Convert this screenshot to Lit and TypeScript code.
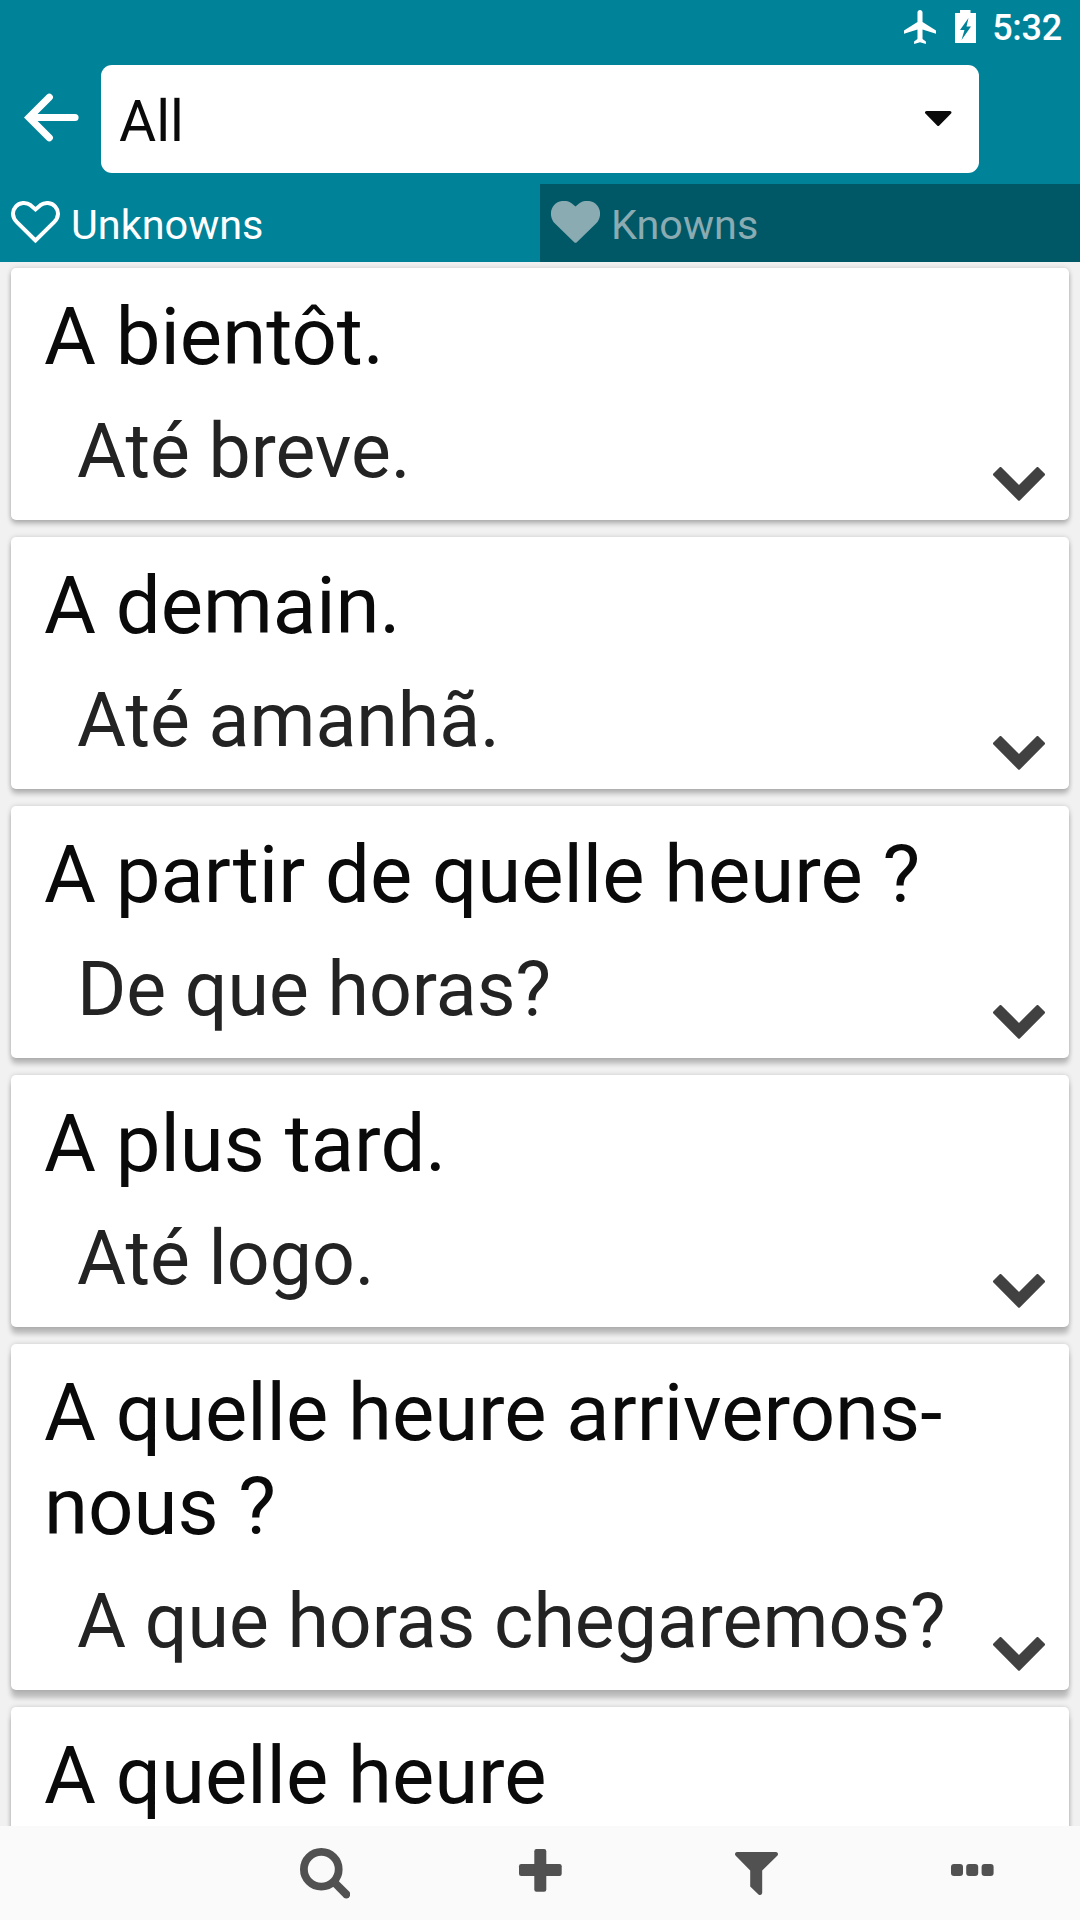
import { LitElement, html, css, svg } from "lit";
import { customElement, property } from "lit/decorators.js";

interface Phrase {
  title: string;
  translation: string;
}

const phrases: Phrase[] = [
  { title: "A bientôt.", translation: "Até breve." },
  { title: "A demain.", translation: "Até amanhã." },
  { title: "A partir de quelle heure ?", translation: "De que horas?" },
  { title: "A plus tard.", translation: "Até logo." },
  { title: "A quelle heure arriverons-nous ?", translation: "A que horas chegaremos?" },
  { title: "A quelle heure", translation: "" },
];

const heartSolid =
  "M23.2 41.2 L4.2 22.8 C-1.4 17 -1.2 9 3 4.2 C7.6 -1.2 16 -1.2 20.6 2.2 L24.5 5.6 L28.4 2.2 C33 -1.2 41.4 -1.2 46 4.2 C50.2 9 50.4 17 44.8 22.8 L25.8 41.2 Q24.5 42.4 23.2 41.2Z";
const heartOutline =
  "M24.5 39.5 L5.9 21.2 C0.9 16 1 9.8 4.6 5.8 C8.4 1.2 15.4 1 19.6 4.2 L24.5 8.4 L29.4 4.2 C33.6 1 40.6 1.2 44.4 5.8 C48 9.8 48.1 16 43.1 21.2Z";

@customElement("phrase-card")
export class PhraseCard extends LitElement {
  @property() heading = "";
  @property() translation = "";
  @property({ type: Number }) depth = 3;

  static styles = css`
    :host {
      display: block;
      flex: none;
    }
    .card {
      display: grid;
      grid-template-columns: minmax(0, 1fr) auto;
      align-items: end;
      background: #fff;
      border-radius: 5px;
      box-shadow: 0 var(--depth) 5px rgba(0, 0, 0, 0.22), 0 0 5px rgba(0, 0, 0, 0.16);
      padding: 22px 24px 19px 33px;
    }
    .heading {
      grid-column: 1 / 3;
      font-size: 79.7px;
      line-height: 94px;
      color: #0a0a0a;
      padding-right: 20px;
    }
    .translation {
      font-size: 75.2px;
      line-height: 89px;
      min-height: 89px;
      color: #232323;
      padding: 23px 0 5px 33px;
      white-space: nowrap;
    }
    .chevron {
      display: block;
      width: 52px;
      height: 34px;
    }
  `;

  render() {
    return html`
      <article class="card" style="--depth: ${this.depth}px">
        <div class="heading">${this.heading}</div>
        <div class="translation">${this.translation}</div>
        <svg class="chevron" viewBox="0 0 52 34">
          <path
            d="M1.500 7.500 L7.500 1.500 L26 20 L44.500 1.500 L50.500 7.500 L26 32.200Z"
            fill="#414141" stroke="#414141" stroke-width="3" stroke-linejoin="round"
          />
        </svg>
      </article>
    `;
  }
}

@customElement("app-root")
export class AppRoot extends LitElement {
  static styles = css`
    :host {
      display: flex;
      flex-direction: column;
      width: 1080px;
      height: 1920px;
      overflow: hidden;
      background: #f1f1f1;
      font-family: Roboto, sans-serif;
    }
    svg {
      display: block;
      flex: none;
    }
    .status {
      flex: none;
      display: flex;
      justify-content: flex-end;
      height: 55px;
      padding: 0 18px 0 0;
      box-sizing: border-box;
      background: #008299;
      color: #fff;
    }
    .plane {
      margin: 10px 19px 0 0;
    }
    .battery {
      margin: 10px 16px 0 0;
    }
    .time {
      font-size: 36px;
      font-weight: 500;
      letter-spacing: -0.25px;
      line-height: 42px;
      padding-top: 7px;
    }
    .header {
      flex: none;
      display: flex;
      height: 129px;
      box-sizing: border-box;
      padding: 10px 101px 0 24px;
      background: #008299;
    }
    .back {
      margin: 28px 22px 0 0;
    }
    .select {
      flex: 1;
      display: flex;
      justify-content: space-between;
      height: 108px;
      box-sizing: border-box;
      padding: 0 27px 0 18px;
      border-radius: 11px;
      background: #fff;
      color: #0a0a0a;
      font-size: 57px;
      line-height: 113px;
    }
    .caret {
      margin-top: 46px;
    }
    .tabs {
      flex: none;
      display: grid;
      grid-template-columns: 1fr 1fr;
      grid-template-rows: 78px;
      height: 78px;
    }
    .tab {
      display: flex;
      gap: 11px;
      padding-left: 11px;
      font-size: 41.4px;
      line-height: 82px;
      color: #fff;
      background: #008299;
    }
    .tab.off {
      color: #8aabb1;
      background: #005866;
    }
    .heart {
      margin-top: 17px;
    }
    .list {
      flex: 1;
      min-height: 0;
      overflow: hidden;
      display: flex;
      flex-direction: column;
      gap: 17px;
      padding: 6px 11px 0;
    }
    .bar {
      flex: none;
      display: grid;
      grid-template-columns: repeat(5, 1fr);
      height: 94px;
      background: #fafafa;
    }
    .tool {
      display: flex;
      justify-content: center;
      padding-top: 21px;
    }
  `;

  private heart(filled: boolean) {
    return html`<svg class="heart" width="49" height="43" viewBox="0 0 49 43">
      ${filled
        ? svg`<path d=${heartSolid} fill="currentColor" />`
        : svg`<path d=${heartOutline} fill="none" stroke="currentColor" stroke-width="4" />`}
    </svg>`;
  }

  render() {
    return html`
      <div class="status">
        <svg class="plane" width="32" height="34" viewBox="2 2 19 20" preserveAspectRatio="none">
          <path fill="#fff" d="M21 16v-2l-8-5V3.5c0-.83-.67-1.5-1.5-1.5S10 2.67 10 3.5V9l-8 5v2l8-2.5V19l-2 1.5V22l3.5-1 3.5 1v-1.5L13 19v-5.5l8 2.5z" />
        </svg>
        <svg class="battery" width="21" height="33" viewBox="0 0 21 33">
          <path fill="#fff" fill-rule="evenodd" d="M0 3H5V0H15.500V3H21V33H0Z M13.500 8L5 20H9.500L6.500 30L16 16.500H11.500Z" />
        </svg>
        <span class="time">5:32</span>
      </div>
      <header class="header">
        <svg class="back" width="55" height="49" viewBox="0 0 55 49">
          <path d="M25.300 4.200 L5 24.500 L25.300 44.800 M6 24.500 H51" fill="none" stroke="#fff" stroke-width="7.200" stroke-linecap="round" />
        </svg>
        <div class="select">
          <span>All</span>
          <svg class="caret" width="27" height="16" viewBox="0 0 27 16">
            <path d="M1.500 1.500 H25 L13.200 13.500Z" fill="#0a0a0a" stroke="#0a0a0a" stroke-width="3" stroke-linejoin="round" />
          </svg>
        </div>
      </header>
      <nav class="tabs">
        <div class="tab">${this.heart(false)}<span>Unknowns</span></div>
        <div class="tab off">${this.heart(true)}<span>Knowns</span></div>
      </nav>
      <main class="list">
        ${phrases.map(
          (p, i) => html`<phrase-card
            .heading=${p.title}
            .translation=${p.translation}
            .depth=${4 + i}
          ></phrase-card>`
        )}
      </main>
      <footer class="bar">
        <div class="tool"></div>
        <div class="tool">
          <svg width="52" height="54" viewBox="0 0 52 54">
            <circle cx="23.300" cy="22.300" r="17.400" fill="none" stroke="#515151" stroke-width="7.800" />
            <path d="M37 36 L48.300 47.300" stroke="#515151" stroke-width="8" stroke-linecap="round" />
          </svg>
        </div>
        <div class="tool">
          <svg width="52" height="54" viewBox="0 0 52 54">
            <rect x="5" y="17" width="42.700" height="12" rx="2.200" fill="#515151" />
            <rect x="20.300" y="2" width="12" height="42.700" rx="2.200" fill="#515151" />
          </svg>
        </div>
        <div class="tool">
          <svg width="52" height="54" viewBox="0 0 52 54">
            <path d="M6.800 5 H46.200 Q49 6 47.500 8.500 L32.200 23.500 V46 Q31.500 49 28.500 47.500 L20.200 39.500 V23.500 L5.500 8.500 Q4 6 6.800 5Z" fill="#515151" />
          </svg>
        </div>
        <div class="tool">
          <svg width="52" height="54" viewBox="0 0 52 54">
            <rect x="5" y="17" width="12" height="12" rx="3" fill="#515151" />
            <rect x="20.200" y="17" width="12" height="12" rx="3" fill="#515151" />
            <rect x="35.600" y="17" width="12" height="12" rx="3" fill="#515151" />
          </svg>
        </div>
      </footer>
    `;
  }
}
